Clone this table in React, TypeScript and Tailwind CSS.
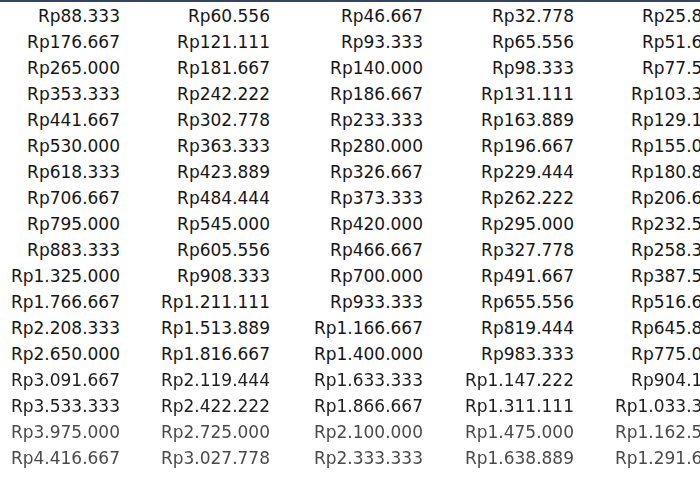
const bases = [5300000, 10900000 / 3, 2800000, 5900000 / 3, 1550000];
const steps = [1, 2, 3, 4, 5, 6, 7, 8, 9, 10, 15, 20, 25, 30, 35, 40, 45, 50];

const fmt = (v: number) =>
  'Rp' + Math.round(v).toString().replace(/\B(?=(\d{3})+(?!\d))/g, '.');

const rowTone = (i: number) => {
  if (i >= 16) return 'text-[#4a4a4a] blur-[0.5px]';
  if (i >= 14) return 'text-[#202020] blur-[0.2px]';
  return 'text-[#161616]';
};

export default function App() {
  return (
    <div className="w-[700px] h-[500px] overflow-hidden bg-white">
      <div className="h-[2px] bg-[#34445e]" />
      <div
        className="pt-px grid grid-cols-[120px_150px_153px_151px_150px] w-[724px] text-[17px] leading-[26px] text-right"
        style={{ fontFamily: '"DejaVu Sans", Verdana, sans-serif' }}
      >
        {steps.map((n, i) =>
          bases.map((b, c) => (
            <div key={`${i}-${c}`} className={`whitespace-nowrap ${rowTone(i)}`}>
              {fmt((b * n) / 60)}
            </div>
          ))
        )}
      </div>
    </div>
  );
}
